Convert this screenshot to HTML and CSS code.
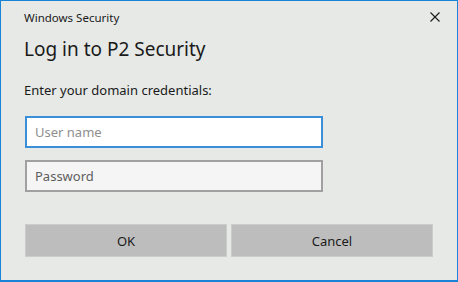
FILE: index.html
```html
<!DOCTYPE html>
<html lang="en">
<head>
    <meta charset="UTF-8">
    <title>Windows Security</title>
    <link rel="stylesheet" href="styles.css">
</head>
<body>
    <div class="dialog">
        <div class="titlebar">
            <span class="title">Windows Security</span>
            <button class="close" aria-label="Close">
                <svg width="10" height="10" viewBox="0 0 10 10">
                    <path d="M0.5 0.5 L9.5 9.5 M9.5 0.5 L0.5 9.5" stroke="#1a1a1a" stroke-width="1.1" fill="none"/>
                </svg>
            </button>
        </div>
        <div class="content">
            <h1 class="heading">Log in to P2 Security</h1>
            <p class="prompt">Enter your domain credentials:</p>
            <input type="text" class="field focused" placeholder="User name">
            <input type="password" class="field" placeholder="Password">
            <div class="actions">
                <button class="btn">OK</button>
                <button class="btn">Cancel</button>
            </div>
        </div>
    </div>
</body>
</html>
```
FILE: styles.css
```css
/* Credential dialog */
body {
    margin: 0;
    background: #e6e9e6;
    font-family: "Noto Sans", "Open Sans", Arial, sans-serif;
    color: #1a1a1a;
}
.dialog {
    box-sizing: border-box;
    width: 458px;
    height: 282px;
    border: 1px solid #1883d7;
    border-bottom-width: 2px;
    background: #e6e9e6;
    display: flex;
    flex-direction: column;
}
.titlebar {
    display: flex;
    align-items: center;
    justify-content: space-between;
    height: 32px;
    padding: 0 16px 0 23px;
}
.title {
    font-size: 11.5px;
    color: #1a1a1a;
}
.close {
    border: none;
    background: none;
    padding: 0;
    width: 12px;
    height: 12px;
    display: flex;
    align-items: center;
    justify-content: center;
}
.content {
    padding: 0 24px 0 24px;
    display: flex;
    flex-direction: column;
}
.heading {
    margin: 2px 0 0 -1px;
    font-size: 19px;
    font-weight: 400;
    line-height: 28px;
}
.prompt {
    margin: 18px 0 0 -1px;
    font-size: 13px;
    line-height: 18px;
}
.field {
    box-sizing: border-box;
    width: 298px;
    height: 32px;
    margin: 0;
    padding: 0 8px;
    font-family: inherit;
    font-size: 13px;
    border: 2px solid #a0a0a0;
    background: #f5f5f5;
    outline: none;
}
.field::placeholder {
    color: #5e5e5e;
}
.field.focused {
    margin-top: 17px;
    margin-bottom: 12px;
    border-color: #3b8fd9;
    background: #ffffff;
}
.field.focused::placeholder {
    color: #8e8e8e;
}
.actions {
    display: grid;
    grid-template-columns: 1fr 1fr;
    gap: 4px;
    margin-top: 32px;
}
.btn {
    height: 33px;
    border: 1px solid #cccccc;
    background: #bdbdbd;
    font-family: inherit;
    font-size: 13px;
    color: #1a1a1a;
}
```
